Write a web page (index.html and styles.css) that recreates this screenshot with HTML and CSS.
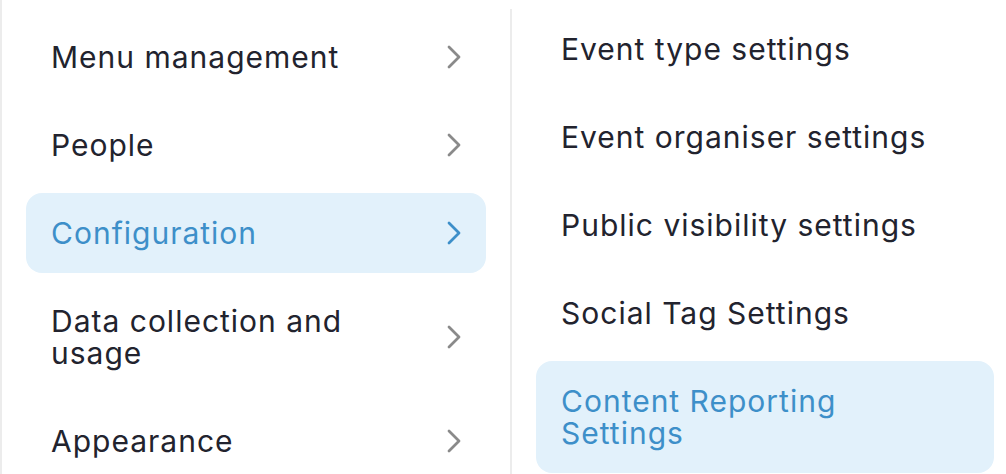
FILE: index.html
```html
<!DOCTYPE html>
<html lang="en">
<head>
    <meta charset="UTF-8">
    <meta name="viewport" content="width=device-width, initial-scale=1.0">
    <title>Settings menu</title>
    <link rel="stylesheet" href="styles.css">
</head>
<body>
    <div class="panels">
        <ul class="menu menu-main">
            <li class="menu-item">
                <span class="label">Menu management</span>
                <svg class="chevron" viewBox="0 0 24 24"><path d="M7 2l10 10-10 10"/></svg>
            </li>
            <li class="menu-item">
                <span class="label">People</span>
                <svg class="chevron" viewBox="0 0 24 24"><path d="M7 2l10 10-10 10"/></svg>
            </li>
            <li class="menu-item active">
                <span class="label">Configuration</span>
                <svg class="chevron" viewBox="0 0 24 24"><path d="M7 2l10 10-10 10"/></svg>
            </li>
            <li class="menu-item">
                <span class="label">Data collection and usage</span>
                <svg class="chevron" viewBox="0 0 24 24"><path d="M7 2l10 10-10 10"/></svg>
            </li>
            <li class="menu-item">
                <span class="label">Appearance</span>
                <svg class="chevron" viewBox="0 0 24 24"><path d="M7 2l10 10-10 10"/></svg>
            </li>
        </ul>

        <ul class="menu menu-sub">
            <li class="menu-item"><span class="label">Event type settings</span></li>
            <li class="menu-item"><span class="label">Event organiser settings</span></li>
            <li class="menu-item"><span class="label">Public visibility settings</span></li>
            <li class="menu-item"><span class="label">Social Tag Settings</span></li>
            <li class="menu-item active"><span class="label">Content Reporting Settings</span></li>
        </ul>
    </div>
</body>
</html>
```

FILE: styles.css
```css
body {
    margin: 0;
    font-family: Inter, "Noto Sans", sans-serif;
    background-color: #fff;
    color: #22232e;
    overflow: hidden;
}
.panels {
    display: grid;
    grid-template-columns: 508px 508px;
    width: 1016px;
    height: 474px;
    border-left: 2px solid #ececec;
}
.menu {
    list-style: none;
    margin: 0;
    padding: 0 24px;
    display: flex;
    flex-direction: column;
    gap: 8px;
}
.menu-main {
    margin-top: 17px;
}
.menu-sub {
    margin-top: 9px;
    border-left: 2px solid #ececec;
}
.menu-item {
    display: flex;
    align-items: center;
    justify-content: space-between;
    min-height: 80px;
    padding: 24px 20px 24px 25px;
    box-sizing: border-box;
    border-radius: 16px;
    font-size: 30px;
    line-height: 32px;
    letter-spacing: 1px;
}
.menu-main .label {
    max-width: 320px;
}
.menu-sub .label {
    max-width: 380px;
}
.chevron {
    width: 24px;
    height: 24px;
    flex-shrink: 0;
    fill: none;
    stroke: #8a8a8a;
    stroke-width: 2.8;
    stroke-linecap: round;
    stroke-linejoin: round;
}
.active {
    background-color: #e2f1fb;
    color: #3d8fc9;
}
.active .chevron {
    stroke: #3d8fc9;
}
```
